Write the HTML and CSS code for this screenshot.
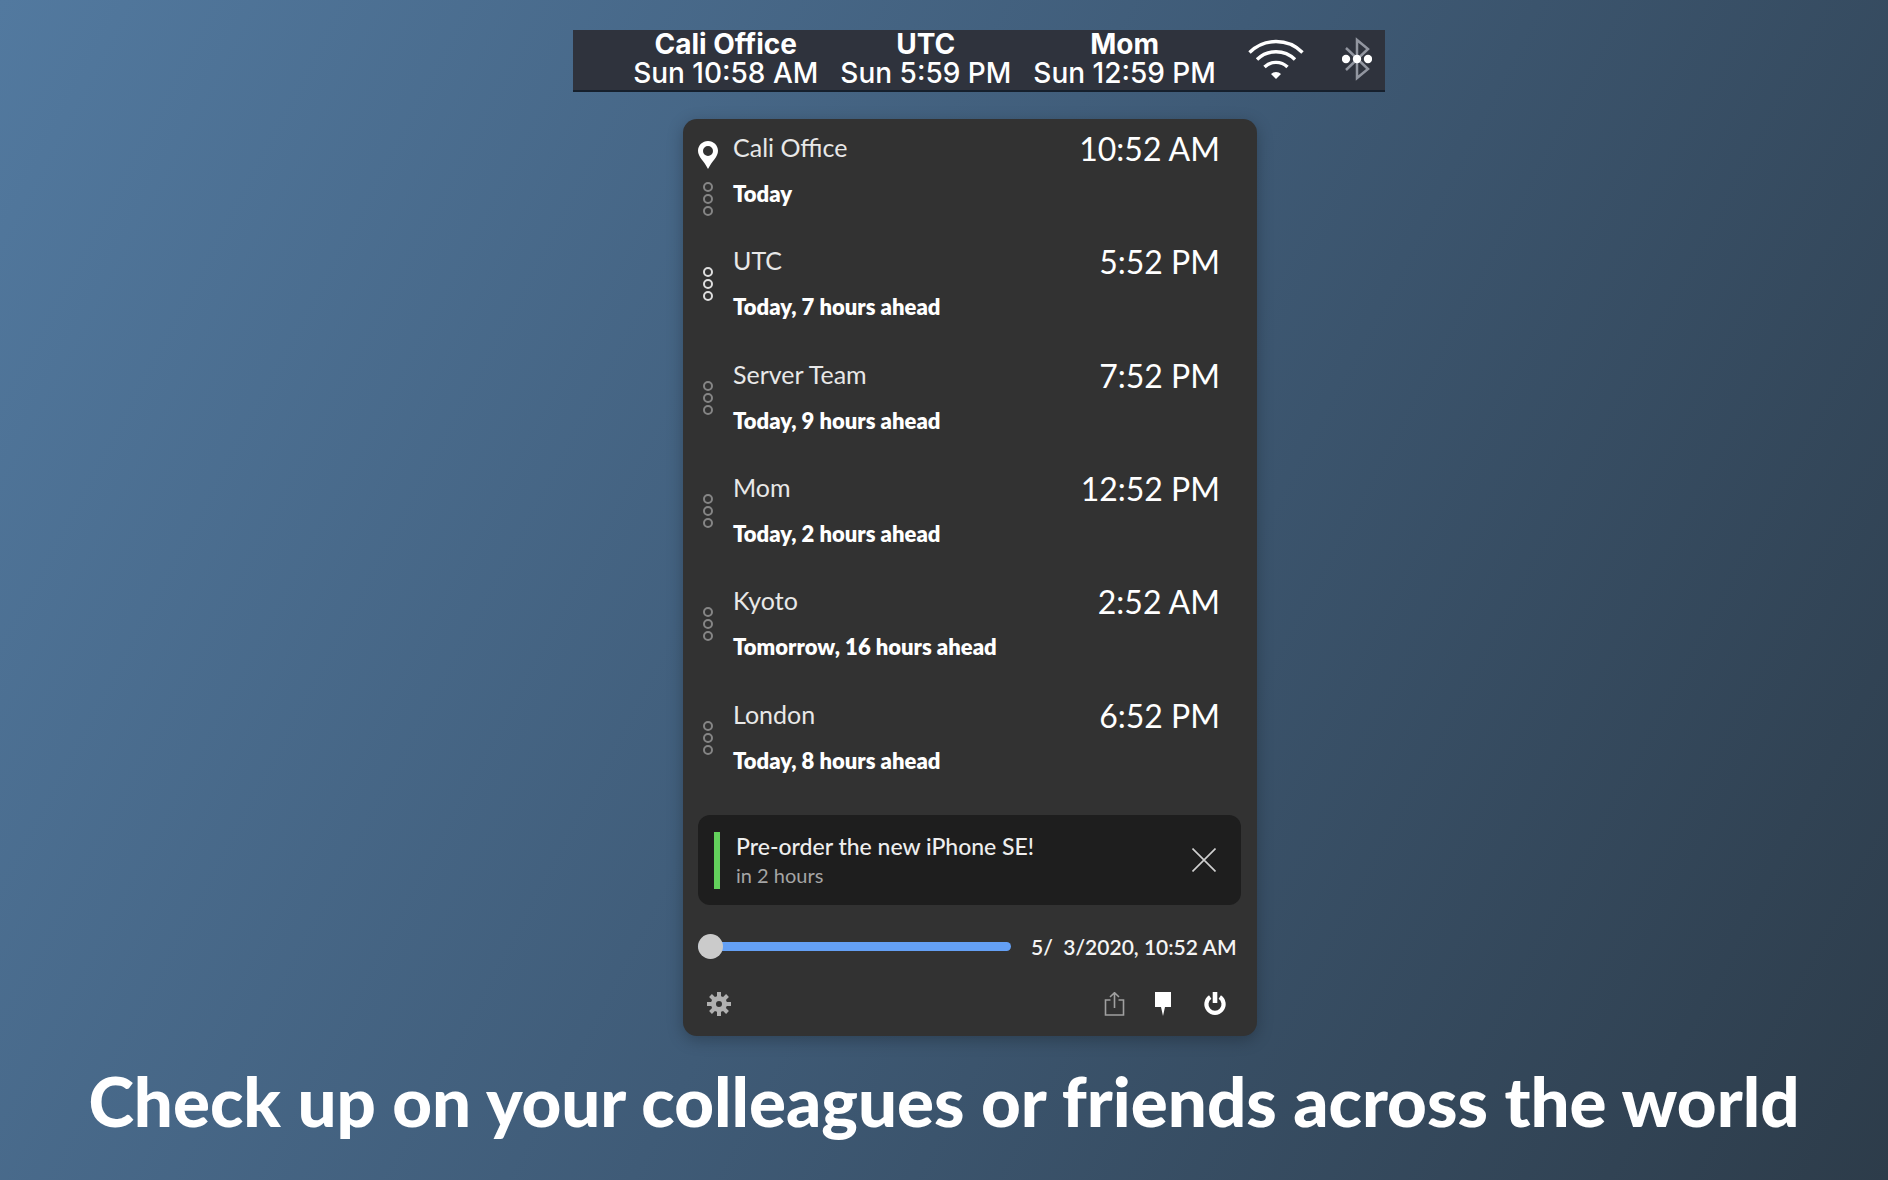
FILE: index.html
```html
<!DOCTYPE html>
<html lang="en">
<head>
<meta charset="utf-8">
<meta name="viewport" content="width=device-width, initial-scale=1">
<title>World clock</title>
<link rel="stylesheet" href="styles.css">
</head>
<body>
<svg class="defs" aria-hidden="true">
  <symbol id="dots" viewBox="0 0 12 36"><g fill="none" stroke="currentColor" stroke-width="2"><circle cx="6" cy="6" r="4"/><circle cx="6" cy="18" r="4"/><circle cx="6" cy="30" r="4"/></g></symbol>
</svg>
<main class="page">
  <header class="menubar">
    <div class="zone"><b>Cali Office</b><span>Sun 10:58 AM</span></div>
    <div class="zone"><b>UTC</b><span>Sun 5:59 PM</span></div>
    <div class="zone"><b>Mom</b><span>Sun 12:59 PM</span></div>
    <svg class="wifi" viewBox="0 0 56 40" role="img" aria-label="Wi-Fi"><g fill="none" stroke="#fff" stroke-width="3.4"><path d="M1.500 13.500A37.500 37.500 0 0 1 54.500 13.500"/><path d="M9 20.500A27 27 0 0 1 47 20.500"/><path d="M16.500 28A16.500 16.500 0 0 1 39.500 28"/></g><path d="M28 40l-5-5a7 7 0 0 1 10 0z" fill="#fff"/></svg>
    <svg class="bluetooth" viewBox="0 0 30 44" role="img" aria-label="Bluetooth"><path d="M4 11l22 21-11 9V3l11 9L4 33" fill="none" stroke="#9296a0" stroke-width="2.500"/><g fill="#fff"><circle cx="4" cy="22" r="4.200"/><circle cx="15" cy="22" r="4.200"/><circle cx="26" cy="22" r="4.200"/></g></svg>
  </header>

  <section class="panel">
    <ul class="clocks">
      <li class="clock">
        <div class="marks pinned">
          <svg class="pin" viewBox="0 0 20 28" aria-hidden="true"><path fill="#fff" fill-rule="evenodd" d="M10 0C4.500 0 0 4.300 0 9.800 0 16 6 20 10 28 14 20 20 16 20 9.800 20 4.300 15.500 0 10 0zm0 5a5 5 0 1 1 0 10 5 5 0 0 1 0-10z"/></svg>
          <svg class="dots"><use href="#dots"/></svg>
        </div>
        <div class="place"><span class="name">Cali Office</span><span class="day">Today</span></div>
        <time class="time">10:52 AM</time>
      </li>
      <li class="clock">
        <div class="marks"><svg class="dots active"><use href="#dots"/></svg></div>
        <div class="place"><span class="name">UTC</span><span class="day">Today, 7 hours ahead</span></div>
        <time class="time">5:52 PM</time>
      </li>
      <li class="clock">
        <div class="marks"><svg class="dots"><use href="#dots"/></svg></div>
        <div class="place"><span class="name">Server Team</span><span class="day">Today, 9 hours ahead</span></div>
        <time class="time">7:52 PM</time>
      </li>
      <li class="clock">
        <div class="marks"><svg class="dots"><use href="#dots"/></svg></div>
        <div class="place"><span class="name">Mom</span><span class="day">Today, 2 hours ahead</span></div>
        <time class="time">12:52 PM</time>
      </li>
      <li class="clock">
        <div class="marks"><svg class="dots"><use href="#dots"/></svg></div>
        <div class="place"><span class="name">Kyoto</span><span class="day">Tomorrow, 16 hours ahead</span></div>
        <time class="time">2:52 AM</time>
      </li>
      <li class="clock">
        <div class="marks"><svg class="dots"><use href="#dots"/></svg></div>
        <div class="place"><span class="name">London</span><span class="day">Today, 8 hours ahead</span></div>
        <time class="time">6:52 PM</time>
      </li>
    </ul>

    <div class="event">
      <i class="stripe"></i>
      <div class="event-text"><span class="event-title">Pre-order the new iPhone SE!</span><span class="event-when">in 2 hours</span></div>
      <button class="icon-button" type="button" aria-label="Dismiss"><svg class="tool" viewBox="0 0 24 24"><path d="M.5.5l23 23M23.500.5l-23 23" stroke="#d0d0d0" stroke-width="1.600"/></svg></button>
    </div>

    <div class="scrub">
      <input class="slider" type="range" min="0" max="100" value="0" aria-label="Time offset">
      <input class="date" type="text" value="5/  3/2020, 10:52 AM" aria-label="Date and time">
    </div>

    <footer class="tools">
      <button class="icon-button settings" type="button" aria-label="Settings"><svg class="tool" viewBox="0 0 24 24"><g stroke="#b0b0b0" stroke-width="4"><path d="M12 0v7M12 17v7M0 12h7M17 12h7M3.500 3.500l5 5M15.500 15.500l5 5M20.500 3.500l-5 5M8.500 15.500l-5 5"/></g><circle cx="12" cy="12" r="5.500" fill="none" stroke="#b0b0b0" stroke-width="5"/></svg></button>
      <button class="icon-button" type="button" aria-label="Share"><svg class="tool" viewBox="0 0 24 24"><path d="M7.500 8H2.500v15h18V8h-5M11.500 16V1M7 5l4.500-4.300L16 5" fill="none" stroke="#a0a0a0" stroke-width="1.600"/></svg></button>
      <button class="icon-button" type="button" aria-label="Pin"><svg class="tool" viewBox="0 0 24 24"><path d="M2 0h16v15h-6l-2 9-2-9H2z" fill="#fff"/></svg></button>
      <button class="icon-button" type="button" aria-label="Quit"><svg class="tool" viewBox="0 0 24 24"><path d="M7.200 5.100a8.600 8.600 0 1 0 9.600 0" fill="none" stroke="#fff" stroke-width="4.200"/><path d="M12 0v11" stroke="#fff" stroke-width="4.600"/></svg></button>
    </footer>
  </section>

  <h1 class="headline">Check up on your colleagues or friends across the world</h1>
</main>
</body>
</html>
```
FILE: styles.css
```css
* { box-sizing: border-box; }

body {
  margin: 0;
  color: #fff;
  font-family: Lato, "Liberation Sans", sans-serif;
}

.defs { position: absolute; width: 0; height: 0; }

.page {
  min-height: 100vh;
  display: flex;
  flex-direction: column;
  align-items: center;
  padding-top: 30px;
  background: linear-gradient(118deg, #52799f 0%, #3f5b77 50%, #2d3c4a 100%);
}

.menubar {
  display: flex;
  align-items: center;
  height: 62px;
  margin-left: 70px;
  padding: 0 13px 2px 60px;
  background: #2f333d;
  border-bottom: 2px solid #16202d;
  font-family: Inter, "Liberation Sans", sans-serif;
}

.zone {
  display: flex;
  flex-direction: column;
  align-items: center;
  margin-right: 22px;
  font-size: 28px;
  line-height: 29px;
  font-weight: 500;
  white-space: nowrap;
}

.zone b { font-weight: 700; }

.wifi { width: 56px; height: 40px; margin: 0 38px 0 10px; }
.bluetooth { width: 30px; height: 44px; }

.panel {
  width: 574px;
  margin: 27px 0 0 52px;
  padding: 0 16px 20px 15px;
  background: #323232;
  border-radius: 14px;
  box-shadow: 0 4px 16px rgba(0, 0, 0, .25);
}

.clocks {
  display: grid;
  grid-template-rows: repeat(6, 1fr);
  height: 680px;
  margin: 0;
  padding: 0;
  list-style: none;
}

.clock {
  display: flex;
  padding: 12px 21px 0 0;
}

.marks {
  display: flex;
  flex-direction: column;
  align-items: center;
  justify-content: center;
  gap: 12px;
  width: 20px;
  height: 80px;
  margin-right: 15px;
}

.marks.pinned { justify-content: flex-start; padding-top: 10px; }

.pin, .dots { flex: none; }
.pin { width: 20px; height: 28px; }
.dots { width: 12px; height: 36px; color: #858585; }
.dots.active { color: #dedede; }

.place {
  display: flex;
  flex: 1;
  flex-direction: column;
  gap: 17px;
}

.name { font-size: 25px; line-height: 32px; color: #e8e8e8; }
.day { font-size: 22px; line-height: 28px; font-weight: 800; }
.time { font-size: 32px; line-height: 36px; }

.event {
  display: flex;
  align-items: center;
  height: 90px;
  margin-top: 16px;
  padding: 0 25px 0 16px;
  background: #1e1e1e;
  border-radius: 12px;
}

.stripe { width: 6px; height: 57px; margin-right: 16px; background: #63d15c; }

.event-text { display: flex; flex: 1; flex-direction: column; }
.event-title { font-size: 23px; line-height: 30px; font-weight: 500; color: #eee; }
.event-when { font-size: 20px; line-height: 28px; color: #a5a5a5; }

.icon-button {
  display: flex;
  padding: 0;
  border: 0;
  background: none;
}

.scrub {
  display: flex;
  align-items: center;
  gap: 20px;
  height: 44px;
  margin-top: 19px;
}

.slider {
  appearance: none;
  flex: 1;
  min-width: 0;
  height: 26px;
  margin: 0;
  background: none;
}

.slider::-webkit-slider-runnable-track {
  height: 9px;
  border-radius: 5px;
  background: #64a0f5;
}

.slider::-webkit-slider-thumb {
  appearance: none;
  width: 25px;
  height: 25px;
  margin-top: -8px;
  border-radius: 50%;
  background: #cbcbcb;
}

.date {
  width: 210px;
  padding: 0;
  border: 0;
  background: none;
  color: #f4f4f4;
  font: 600 21px Lato, "Liberation Sans", sans-serif;
}

.tools {
  display: flex;
  gap: 26px;
  margin: 24px 14px 0 9px;
}

.settings { margin-right: auto; }
.tool { width: 24px; height: 24px; }

.headline {
  margin: 25px 0 0;
  font-size: 69px;
  line-height: 80px;
  font-weight: 900;
  text-align: center;
}
```
